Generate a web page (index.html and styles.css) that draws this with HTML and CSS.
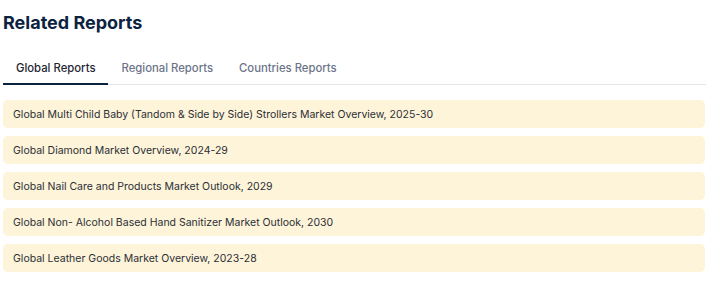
FILE: index.html
```html
<!DOCTYPE html>
<html lang="en">
<head>
  <meta charset="UTF-8" />
  <meta name="viewport" content="width=device-width, initial-scale=1.0"/>
  <title>Related Reports</title>
  <link rel="stylesheet" href="styles.css">
</head>
<body>
  <div class="related">
    <h2 class="related-title">Related Reports</h2>

    <div class="tabs">
      <a class="tab active" href="#">Global Reports</a>
      <a class="tab" href="#">Regional Reports</a>
      <a class="tab" href="#">Countries Reports</a>
    </div>

    <ul class="report-list">
      <li class="report-item"><a href="#">Global Multi Child Baby (Tandom &amp; Side by Side) Strollers Market Overview, 2025-30</a></li>
      <li class="report-item"><a href="#">Global Diamond Market Overview, 2024-29</a></li>
      <li class="report-item"><a href="#">Global Nail Care and Products Market Outlook, 2029</a></li>
      <li class="report-item"><a href="#">Global Non- Alcohol Based Hand Sanitizer Market Outlook, 2030</a></li>
      <li class="report-item"><a href="#">Global Leather Goods Market Overview, 2023-28</a></li>
    </ul>
  </div>
</body>
</html>
```

FILE: styles.css
```css
body {
  margin: 0;
  font-family: Inter, 'Noto Sans', sans-serif;
  background: #fff;
  color: #333;
}
.related {
  width: 703px;
  padding: 0 0 0 3px;
}
.related-title {
  margin: 0;
  padding-top: 12px;
  font-size: 18px;
  line-height: 22px;
  font-weight: 700;
  color: #0c2340;
}
.tabs {
  display: flex;
  margin-top: 22px;
  border-bottom: 1px solid #e3e5e8;
}
.tab {
  padding: 0 13px;
  height: 29px;
  line-height: 24px;
  font-size: 11.3px;
  font-weight: 500;
  color: #6b7489;
  text-decoration: none;
  border-bottom: 2px solid transparent;
  margin-bottom: -1px;
  box-sizing: border-box;
}
.tab.active {
  color: #1f2733;
  border-bottom-color: #0c2340;
}
.report-list {
  list-style: none;
  margin: 15px 0 0;
  padding: 0;
  display: flex;
  flex-direction: column;
  gap: 8px;
  width: 702px;
}
.report-item {
  background: #fef4d9;
  border-radius: 5px;
  height: 28px;
  display: flex;
  align-items: center;
  padding: 0 10px;
}
.report-item a {
  font-size: 10.5px;
  color: #2b2f36;
  text-decoration: none;
}
```
